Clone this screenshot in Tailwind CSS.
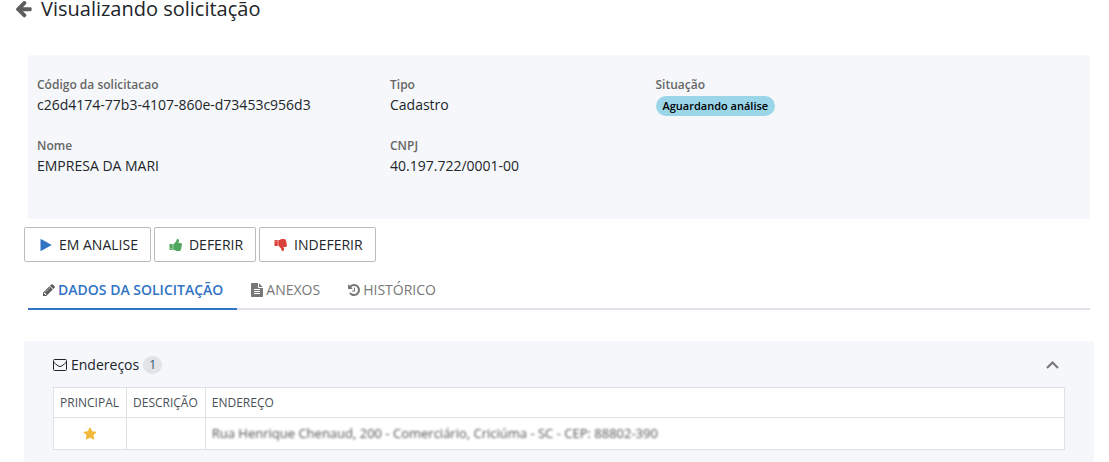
<!DOCTYPE html>
<html lang="pt-BR">
<head>
    <meta charset="UTF-8">
    <meta name="viewport" content="width=device-width, initial-scale=1.0">
    <title>Visualizando solicitação</title>
    <script src="https://cdn.jsdelivr.net/npm/@tailwindcss/browser@4"></script>
</head>
<body class="bg-white text-[#212529] text-sm font-['Open_Sans',sans-serif]">

    <!-- Title -->
    <header class="h-[17px] flex items-center gap-2 pl-[14px]">
        <a href="#" aria-label="Voltar" class="text-[#5c5c5c]">
            <svg class="size-[19px]" viewBox="0 0 1792 1792" fill="currentColor"><path d="M1664 896v128q0 53-32.5 90.5t-84.5 37.5h-704l293 294q38 36 38 90t-38 90l-75 76q-37 37-90 37-52 0-91-37l-651-652q-37-37-37-90 0-52 37-91l651-650q38-38 91-38 52 0 90 38l75 74q38 38 38 91t-38 91l-293 293h704q52 0 84.5 37.5t32.5 90.5z"/></svg>
        </a>
        <h1 class="text-xl leading-4">Visualizando solicitação</h1>
    </header>

    <main class="pt-[38px] pl-6 pr-[15px]">
        <!-- Request summary -->
        <dl class="mx-1 pt-5 pb-[43px] grid grid-cols-12 gap-y-5 bg-[#f5f7fb] rounded-xs">
            <div class="col-span-4 px-[9px]">
                <dt class="text-xs leading-5 font-semibold text-[#666]">Código da solicitacao</dt>
                <dd class="leading-5">c26d4174-77b3-4107-860e-d73453c956d3</dd>
            </div>
            <div class="col-span-3 px-2">
                <dt class="text-xs leading-5 font-semibold text-[#666]">Tipo</dt>
                <dd class="leading-5">Cadastro</dd>
            </div>
            <div class="col-span-5 px-2">
                <dt class="text-xs leading-5 font-semibold text-[#666]">Situação</dt>
                <dd class="pt-px flex"><span class="px-[7px] rounded-full bg-[#9ad5e8] text-black text-[11px] leading-5 font-semibold">Aguardando análise</span></dd>
            </div>
            <div class="col-span-4 px-[9px]">
                <dt class="text-xs leading-5 font-semibold text-[#666]">Nome</dt>
                <dd class="leading-5">EMPRESA DA MARI</dd>
            </div>
            <div class="col-span-3 px-2">
                <dt class="text-xs leading-5 font-semibold text-[#666]">CNPJ</dt>
                <dd class="leading-5">40.197.722/0001-00</dd>
            </div>
        </dl>

        <!-- Actions -->
        <div class="mt-2 flex gap-[3px]">
            <button class="h-[35px] pl-[14px] pr-3 flex items-center gap-1.5 border border-[#bbb] rounded-xs">
                <svg class="size-[14px] text-[#3174c4]" viewBox="0 0 1792 1792" fill="currentColor"><path d="M1576 927l-1328 738q-23 13-39.5 3t-16.5-36v-1472q0-26 16.5-36t39.5 3l1328 738q23 13 23 31t-23 31z"/></svg>
                EM ANALISE
            </button>
            <button class="h-[35px] pl-[14px] pr-3 flex items-center gap-1.5 border border-[#bbb] rounded-xs">
                <svg class="size-[14px] text-[#4fa65f]" viewBox="0 0 1792 1792" fill="currentColor"><path d="M320 1344q0-26-19-45t-45-19q-27 0-45.5 19t-18.5 45q0 27 18.5 45.5t45.5 18.5q26 0 45-18.5t19-45.5zm160-512v640q0 26-19 45t-45 19h-288q-26 0-45-19t-19-45v-640q0-26 19-45t45-19h288q26 0 45 19t19 45zm1184 0q0 86-55 149 15 44 15 76 3 76-43 137 17 56 0 117-15 57-54 94 9 112-49 181-64 76-197 78h-129q-66 0-144-15.5t-121.5-29-120.5-39.5q-123-43-158-44-26-1-45-19.5t-19-44.5v-641q0-25 18-43.5t43-20.5q24-2 76-59t101-121q68-87 101-120 18-18 31-48t17.5-48.5 13.5-60.5q7-39 12.5-61t19.5-52 34-50q19-19 45-19 46 0 82.5 10.5t60 26 40 40.5 24 45 12 50 5 45 .5 39q0 38-9.5 76t-19 60-27.5 56q-3 6-10 18t-11 22-8 24h277q78 0 135 57t57 135z"/></svg>
                DEFERIR
            </button>
            <button class="h-[35px] pl-[14px] pr-3 flex items-center gap-1.5 border border-[#bbb] rounded-xs">
                <svg class="size-[14px] text-[#d9403a]" viewBox="0 0 1792 1792" fill="currentColor"><path transform="matrix(1 0 0 -1 0 1792)" d="M320 1344q0-26-19-45t-45-19q-27 0-45.5 19t-18.5 45q0 27 18.5 45.5t45.5 18.5q26 0 45-18.5t19-45.5zm160-512v640q0 26-19 45t-45 19h-288q-26 0-45-19t-19-45v-640q0-26 19-45t45-19h288q26 0 45 19t19 45zm1184 0q0 86-55 149 15 44 15 76 3 76-43 137 17 56 0 117-15 57-54 94 9 112-49 181-64 76-197 78h-129q-66 0-144-15.5t-121.5-29-120.5-39.5q-123-43-158-44-26-1-45-19.5t-19-44.5v-641q0-25 18-43.5t43-20.5q24-2 76-59t101-121q68-87 101-120 18-18 31-48t17.5-48.5 13.5-60.5q7-39 12.5-61t19.5-52 34-50q19-19 45-19 46 0 82.5 10.5t60 26 40 40.5 24 45 12 50 5 45 .5 39q0 38-9.5 76t-19 60-27.5 56q-3 6-10 18t-11 22-8 24h277q78 0 135 57t57 135z"/></svg>
                INDEFERIR
            </button>
        </div>

        <!-- Tabs -->
        <nav class="mx-1 mt-2 flex border-b-2 border-[#e1e2e8] text-[#777]">
            <a href="#" class="-mb-0.5 px-[14px] pt-2.5 pb-2 flex items-center gap-0.5 border-b-2 border-[#3174c4] text-[#3174c4] font-semibold">
                <svg class="size-[14px] text-[#5c5c5c]" viewBox="0 0 1792 1792" fill="currentColor"><path d="M491 1536l91-91-235-235-91 91v107h128v128h107zm523-928q0-22-22-22-10 0-17 7l-542 542q-7 7-7 17 0 22 22 22 10 0 17-7l542-542q7-7 7-17zm-54-192l416 416-832 832h-416v-416zm683 96q0 53-37 90l-166 166-416-416 166-165q36-38 90-38 53 0 91 38l235 234q37 39 37 91z"/></svg>
                DADOS DA SOLICITAÇÃO
            </a>
            <a href="#" class="px-[13px] pt-2.5 pb-2 flex items-center gap-0.5">
                <svg class="size-[14px]" viewBox="0 0 1792 1792" fill="currentColor"><path d="M1596 476q14 14 28 36h-472v-472q22 14 36 28zm-476 164h544v1056q0 40-28 68t-68 28h-1344q-40 0-68-28t-28-68v-1600q0-40 28-68t68-28h800v544q0 40 28 68t68 28zm160 736v-64q0-14-9-23t-23-9h-704q-14 0-23 9t-9 23v64q0 14 9 23t23 9h704q14 0 23-9t9-23zm0-256v-64q0-14-9-23t-23-9h-704q-14 0-23 9t-9 23v64q0 14 9 23t23 9h704q14 0 23-9t9-23zm0-256v-64q0-14-9-23t-23-9h-704q-14 0-23 9t-9 23v64q0 14 9 23t23 9h704q14 0 23-9t9-23z"/></svg>
                ANEXOS
            </a>
            <a href="#" class="px-[14px] pt-2.5 pb-2 flex items-center gap-0.5">
                <svg class="size-[14px]" viewBox="0 0 1792 1792" fill="currentColor"><path d="M1664 896q0 156-61 298t-164 245-245 164-298 61q-172 0-327-72.5t-264-204.5q-7-10-6.5-22.5t8.5-20.5l137-138q10-9 25-9 16 2 23 12 73 95 179 147t225 52q104 0 198.5-40.5t163.5-109.5 109.5-163.5 40.5-198.5-40.5-198.5-109.5-163.5-163.5-109.5-198.5-40.5q-98 0-188 35.5t-160 101.5l137 138q31 30 14 69-17 40-59 40h-448q-26 0-45-19t-19-45v-448q0-42 40-59 39-17 69 14l130 129q107-101 244.5-156.5t284.5-55.5q156 0 298 61t245 164 164 245 61 298zm-640-288v448q0 14-9 23t-23 9h-320q-14 0-23-9t-9-23v-64q0-14 9-23t23-9h224v-352q0-14 9-23t23-9h64q14 0 23 9t9 23z"/></svg>
                HISTÓRICO
            </a>
        </nav>

        <!-- Addresses -->
        <section class="mt-[31px] pt-[14px] px-[29px] pb-3 bg-[#f5f7fb] rounded-xs">
            <div class="flex items-center justify-between">
                <h2 class="flex items-center gap-1">
                    <svg class="w-[14px] h-3" viewBox="0 0 14 12" fill="none" stroke="currentColor"><rect x=".5" y=".5" width="13" height="11" rx="1"/><path d="M.5 3Q2 4.500 5 6.800Q7 8.500 9 6.800Q12 4.500 13.500 3"/></svg>
                    Endereços
                    <span class="px-1.5 rounded-full bg-[#e1e3e6] text-xs leading-[18px] text-[#35556b]">1</span>
                </h2>
                <button aria-label="Recolher" class="px-1.5 text-[#777]">
                    <svg class="w-[13px] h-2" viewBox="0 0 13 8" fill="none" stroke="currentColor" stroke-width="2"><path d="M1 7l5.500-5.500L12 7"/></svg>
                </button>
            </div>
            <table class="mt-3 w-full bg-white border-collapse text-left">
                <thead>
                    <tr class="h-[30px] text-xs text-[#495057]">
                        <th class="pl-1.5 pr-[7px] border border-[#dee2e6] font-medium">PRINCIPAL</th>
                        <th class="pl-1.5 pr-[7px] border border-[#dee2e6] font-medium">DESCRIÇÃO</th>
                        <th class="w-full pl-1.5 pr-[7px] border border-[#dee2e6] font-medium">ENDEREÇO</th>
                    </tr>
                </thead>
                <tbody>
                    <tr class="h-8 text-[13px]">
                        <td class="px-1.5 border border-[#dee2e6]">
                            <svg class="mx-auto size-[14px] text-[#f2b838]" viewBox="0 0 1792 1792" fill="currentColor"><path d="M1728 647q0 22-26 48l-363 354 86 500q1 7 1 20 0 21-10.5 35.5t-30.5 14.5q-19 0-40-12l-449-236-449 236q-22 12-40 12-21 0-31.5-14.5t-10.5-35.5q0-6 2-20l86-500-364-354q-25-27-25-48 0-37 56-46l502-73 225-455q19-41 49-41t49 41l225 455 502 73q56 9 56 46z"/></svg>
                        </td>
                        <td class="px-1.5 border border-[#dee2e6]"></td>
                        <td class="px-1.5 border border-[#dee2e6]"><span class="blur-[1px] text-[#555]">Rua Henrique Chenaud, 200 - Comerciário, Criciúma - SC - CEP: 88802-390</span></td>
                    </tr>
                </tbody>
            </table>
        </section>
    </main>

</body>
</html>
